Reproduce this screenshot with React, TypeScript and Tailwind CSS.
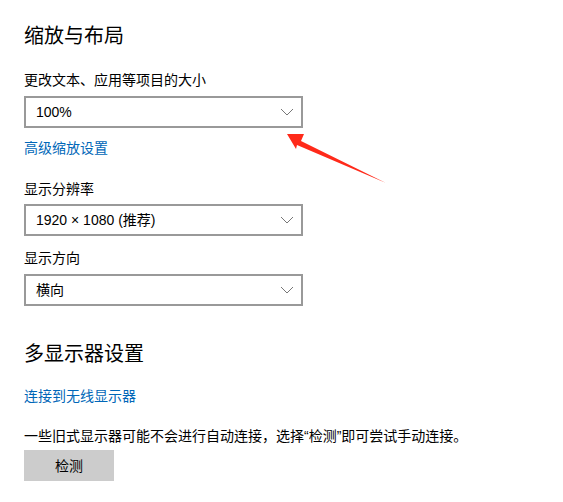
import React from 'react';

const font = { fontFamily: '"Liberation Sans", "Noto Sans CJK SC", sans-serif' };

const Chevron: React.FC = () => (
    <svg width="14" height="8" viewBox="0 0 14 8" className="shrink-0">
        <path d="M1 1 L7 7 L13 1" fill="none" stroke="#777" strokeWidth="1" />
    </svg>
);

const Select: React.FC<{ value: string }> = ({ value }) => (
    <div className="flex h-[32px] w-[279px] items-center justify-between border-2 border-[#999] bg-white pl-[10px] pr-[7px]">
        <span className="text-[14px] leading-[20px] text-black">{value}</span>
        <Chevron />
    </div>
);

const App: React.FC = () => {
    return (
        <div className="relative h-[502px] w-[563px] overflow-hidden bg-white pl-[24px] pt-[22px] text-black" style={font}>
            <h1 className="h-[28px] text-[20px] font-normal leading-[28px]">缩放与布局</h1>

            <p className="mt-[19px] text-[14px] leading-[22px]">更改文本、应用等项目的大小</p>
            <div className="mt-[5px]">
                <Select value="100%" />
            </div>
            <a className="mt-[10px] block text-[14px] leading-[20px] text-[#0067b8]">高级缩放设置</a>

            <p className="mt-[20px] text-[14px] leading-[22px]">显示分辨率</p>
            <div className="mt-[4px]">
                <Select value="1920 × 1080 (推荐)" />
            </div>

            <p className="mt-[11px] text-[14px] leading-[22px]">显示方向</p>
            <div className="mt-[5px]">
                <Select value="横向" />
            </div>

            <h2 className="mt-[33px] h-[30px] text-[20px] font-normal leading-[30px]">多显示器设置</h2>
            <a className="mt-[16px] block text-[14px] leading-[22px] text-[#0067b8]">连接到无线显示器</a>

            <p className="mt-[18px] text-[14px] leading-[22px]">一些旧式显示器可能不会进行自动连接，选择“检测”即可尝试手动连接。</p>
            <button className="mt-[3px] flex h-[31px] w-[90px] items-center justify-center bg-[#cccccc] text-[14px] leading-[20px]">
                检测
            </button>

            <svg className="pointer-events-none absolute left-0 top-0" width="563" height="502" viewBox="0 0 563 502">
                <polygon
                    points="287,134 304,134 301,141 386,183 297,145 296,149"
                    fill="#ff2a1a"
                />
            </svg>
        </div>
    );
};

export default App;
